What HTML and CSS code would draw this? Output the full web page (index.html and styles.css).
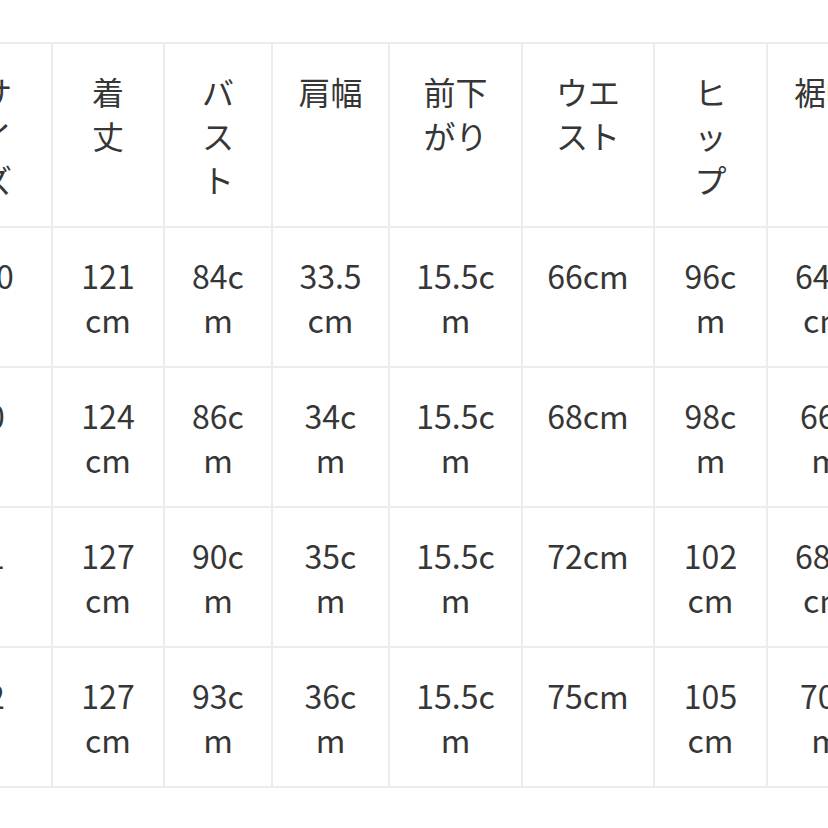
FILE: index.html
```html
<!DOCTYPE html>
<html lang="ja">
<head>
<meta charset="utf-8">
<title>サイズ表</title>
<link rel="stylesheet" href="styles.css">
</head>
<body>
<div class="scroller">
  <table class="size-table">
    <colgroup>
      <col class="c-size">
      <col class="c-length">
      <col class="c-bust">
      <col class="c-shoulder">
      <col class="c-front">
      <col class="c-waist">
      <col class="c-hip">
      <col class="c-hem">
    </colgroup>
    <thead>
      <tr>
        <th>サイズ</th>
        <th>着丈</th>
        <th>バスト</th>
        <th>肩幅</th>
        <th>前下がり</th>
        <th>ウエスト</th>
        <th>ヒップ</th>
        <th>裾幅</th>
      </tr>
    </thead>
    <tbody>
      <tr>
        <td>00</td><td>121cm</td><td>84cm</td><td>33.5cm</td><td>15.5cm</td><td>66cm</td><td>96cm</td><td>64.5cm</td>
      </tr>
      <tr>
        <td>0</td><td>124cm</td><td>86cm</td><td>34cm</td><td>15.5cm</td><td>68cm</td><td>98cm</td><td>66cm</td>
      </tr>
      <tr>
        <td>1</td><td>127cm</td><td>90cm</td><td>35cm</td><td>15.5cm</td><td>72cm</td><td>102cm</td><td>68.5cm</td>
      </tr>
      <tr>
        <td>2</td><td>127cm</td><td>93cm</td><td>36cm</td><td>15.5cm</td><td>75cm</td><td>105cm</td><td>70cm</td>
      </tr>
    </tbody>
  </table>
</div>
</body>
</html>
```

FILE: styles.css
```css
html, body {
  margin: 0;
  padding: 0;
  background: #ffffff;
}

body {
  width: 828px;
  height: 828px;
  overflow: hidden;
  font-family: "Noto Sans CJK JP", "Noto Sans", sans-serif;
  color: #363636;
}

.scroller {
  padding-top: 42px;
  overflow: hidden;
}

.size-table {
  margin-left: -61px;
  table-layout: fixed;
  border-collapse: collapse;
  width: 945px;
}

.c-size { width: 112px; }
.c-length { width: 112px; }
.c-bust { width: 108px; }
.c-shoulder { width: 117px; }
.c-front { width: 133px; }
.c-waist { width: 132px; }
.c-hip { width: 113px; }
.c-hem { width: 118px; }

.size-table th,
.size-table td {
  border: 2px solid #ececec;
  padding: 25px 24px;
  font-size: 32px;
  line-height: 44px;
  font-weight: 400;
  text-align: center;
  vertical-align: top;
  word-break: break-all;
}
```
